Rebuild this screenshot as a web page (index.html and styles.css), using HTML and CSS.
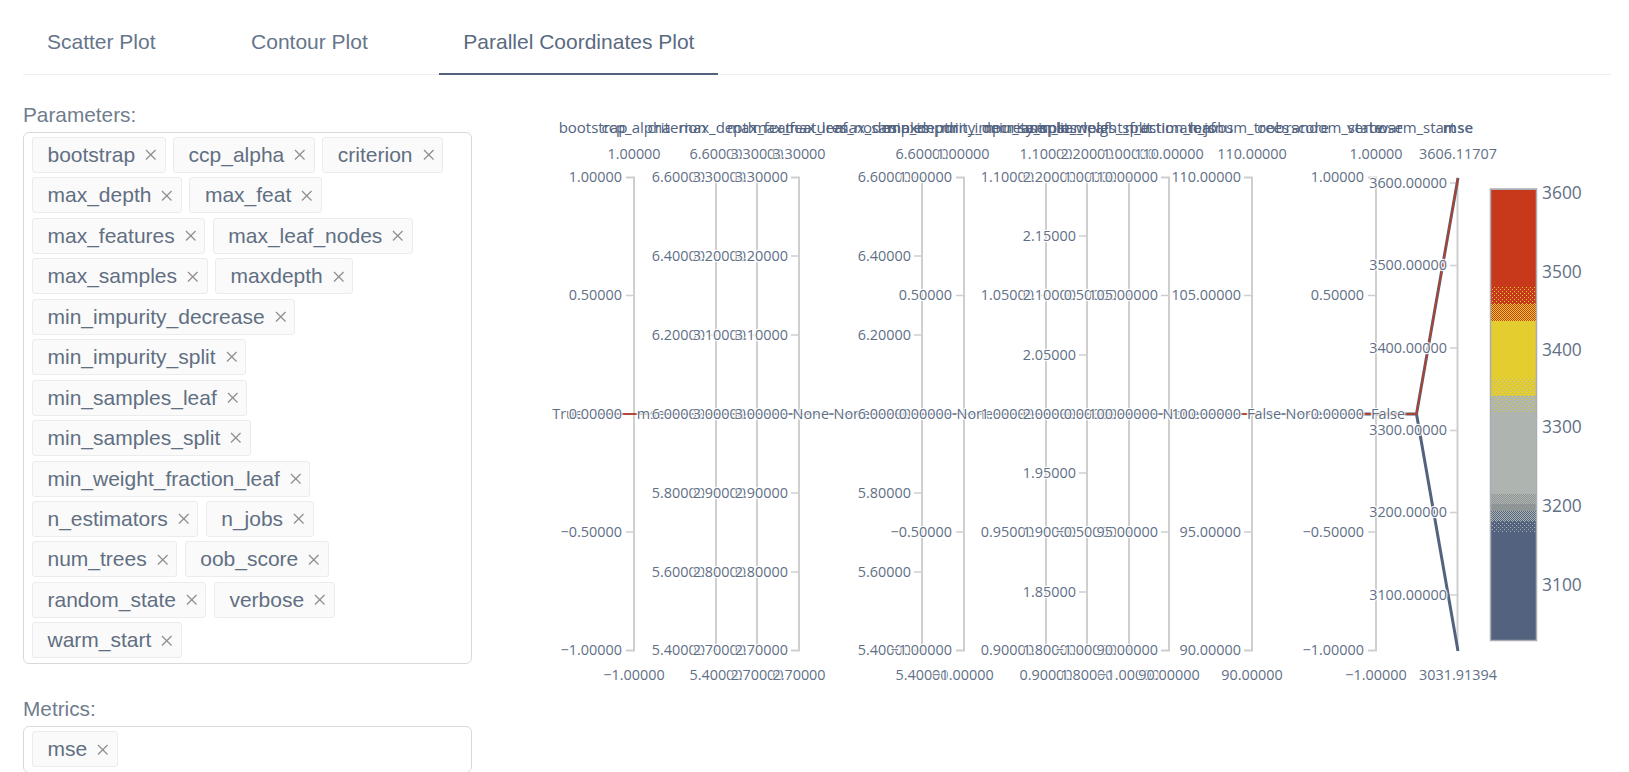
FILE: index.html
```html
<!DOCTYPE html>
<html lang="en">
<head>
<meta charset="utf-8">
<title>Parallel Coordinates Plot</title>
<link rel="stylesheet" href="styles.css">
</head>
<body>
<svg class="sprite" aria-hidden="true"><symbol id="close" viewBox="0 0 12 12"><path d="M1 1 11 11M11 1 1 11"/></symbol></svg>
<nav class="tabs">
  <div class="tab">Scatter Plot</div>
  <div class="tab">Contour Plot</div>
  <div class="tab active">Parallel Coordinates Plot</div>
</nav>
<main class="main">
  <section class="controls">
    <div class="field-label">Parameters:</div>
    <div class="select">
      <span class="tag">bootstrap<svg class="x"><use href="#close"/></svg></span>
      <span class="tag">ccp_alpha<svg class="x"><use href="#close"/></svg></span>
      <span class="tag">criterion<svg class="x"><use href="#close"/></svg></span>
      <span class="tag">max_depth<svg class="x"><use href="#close"/></svg></span>
      <span class="tag">max_feat<svg class="x"><use href="#close"/></svg></span>
      <span class="tag">max_features<svg class="x"><use href="#close"/></svg></span>
      <span class="tag">max_leaf_nodes<svg class="x"><use href="#close"/></svg></span>
      <span class="tag">max_samples<svg class="x"><use href="#close"/></svg></span>
      <span class="tag">maxdepth<svg class="x"><use href="#close"/></svg></span>
      <span class="tag">min_impurity_decrease<svg class="x"><use href="#close"/></svg></span>
      <span class="tag">min_impurity_split<svg class="x"><use href="#close"/></svg></span>
      <span class="tag">min_samples_leaf<svg class="x"><use href="#close"/></svg></span>
      <span class="tag">min_samples_split<svg class="x"><use href="#close"/></svg></span>
      <span class="tag">min_weight_fraction_leaf<svg class="x"><use href="#close"/></svg></span>
      <span class="tag">n_estimators<svg class="x"><use href="#close"/></svg></span>
      <span class="tag">n_jobs<svg class="x"><use href="#close"/></svg></span>
      <span class="tag">num_trees<svg class="x"><use href="#close"/></svg></span>
      <span class="tag">oob_score<svg class="x"><use href="#close"/></svg></span>
      <span class="tag">random_state<svg class="x"><use href="#close"/></svg></span>
      <span class="tag">verbose<svg class="x"><use href="#close"/></svg></span>
      <span class="tag">warm_start<svg class="x"><use href="#close"/></svg></span>
    </div>
    <div class="field-label metrics">Metrics:</div>
    <div class="select">
      <span class="tag">mse<svg class="x"><use href="#close"/></svg></span>
    </div>
  </section>
  <svg class="chart" viewBox="472 74 1157 698" width="1157" height="698" role="img" aria-label="Parallel coordinates plot">
    <defs>
      <pattern id="pSparse" width="4" height="4" patternUnits="userSpaceOnUse"><rect width="1" height="1" fill="#fff"/><rect x="2" y="2" width="1" height="1" fill="#fff"/></pattern>
      <pattern id="pChecker" width="2" height="2" patternUnits="userSpaceOnUse"><rect width="1" height="1" fill="#fff"/><rect x="1" y="1" width="1" height="1" fill="#fff"/></pattern>
      <mask id="mSparse" maskUnits="userSpaceOnUse" x="1490" y="188" width="47" height="452"><rect x="1490" y="188" width="47" height="452" fill="url(#pSparse)"/></mask>
      <mask id="mChecker" maskUnits="userSpaceOnUse" x="1490" y="188" width="47" height="452"><rect x="1490" y="188" width="47" height="452" fill="url(#pChecker)"/></mask>
    </defs>

    <g class="axes">
      <path d="M626 176.5h8V649.5h-8"/><path d="M708 176.5h8V649.5h-8"/><path d="M749 176.5h8V649.5h-8"/><path d="M791 176.5h8V649.5h-8"/>
      <path d="M914 176.5h8V649.5h-8"/><path d="M956 176.5h8V649.5h-8"/><path d="M1038 176.5h8V649.5h-8"/><path d="M1079 176.5h8V649.5h-8"/>
      <path d="M1121 176.5h8V649.5h-8"/><path d="M1161 176.5h8V649.5h-8"/><path d="M1244 176.5h8V649.5h-8"/><path d="M1368 176.5h8V649.5h-8"/>
      <path d="M1457.5 176.5V649.5"/>
    </g>
    <g class="minor">
      <path d="M626 294.5h8M626 413h8M626 531h8"/>
      <path d="M708 255h8M708 334h8M708 413h8M708 492h8M708 571h8"/>
      <path d="M749 255h8M749 334h8M749 413h8M749 492h8M749 571h8"/>
      <path d="M791 255h8M791 334h8M791 413h8M791 492h8M791 571h8"/>
      <path d="M914 255h8M914 334h8M914 413h8M914 492h8M914 571h8"/>
      <path d="M956 294.5h8M956 413h8M956 531h8"/>
      <path d="M1038 294.5h8M1038 413h8M1038 531h8"/>
      <path d="M1079 235h8M1079 294.5h8M1079 354h8M1079 413h8M1079 472h8M1079 531h8M1079 591h8"/>
      <path d="M1121 294.5h8M1121 413h8M1121 531h8"/>
      <path d="M1161 294.5h8M1161 413h8M1161 531h8"/>
      <path d="M1244 294.5h8M1244 413h8M1244 531h8"/>
      <path d="M1368 294.5h8M1368 413h8M1368 531h8"/>
      <path d="M1450 182h7M1450 264.5h7M1450 347h7M1450 429.5h7M1450 511.5h7M1450 594h7"/>
    </g>

    <path class="data-mid" d="M595 413H1416.5"/>
    <path class="data-blue" d="M1360 413H1416.5L1458 177M1416.5 413 1458 650"/>
    <path class="data-red" d="M622 413H640M1240 413H1256M1360 413H1416.5L1458 177"/>

    <g class="labels">
      <text x="583" y="413">True</text>
      <text x="622" y="176">1.00000</text><text x="622" y="294.5">0.50000</text><text x="622" y="413">0.00000</text><text x="622" y="531">−0.50000</text><text x="622" y="649">−1.00000</text>
      <text x="665" y="413">mse</text>
      <text x="705" y="176">6.60000</text><text x="705" y="255">6.40000</text><text x="705" y="334">6.20000</text><text x="705" y="413">6.00000</text><text x="705" y="492">5.80000</text><text x="705" y="571">5.60000</text><text x="705" y="649">5.40000</text>
      <text x="746" y="176">3.30000</text><text x="746" y="255">3.20000</text><text x="746" y="334">3.10000</text><text x="746" y="413">3.00000</text><text x="746" y="492">2.90000</text><text x="746" y="571">2.80000</text><text x="746" y="649">2.70000</text>
      <text x="788" y="176">3.30000</text><text x="788" y="255">3.20000</text><text x="788" y="334">3.10000</text><text x="788" y="413">3.00000</text><text x="788" y="492">2.90000</text><text x="788" y="571">2.80000</text><text x="788" y="649">2.70000</text>
      <text x="829" y="413">None</text>
      <text x="870" y="413">None</text>
      <text x="911" y="176">6.60000</text><text x="911" y="255">6.40000</text><text x="911" y="334">6.20000</text><text x="911" y="413">6.00000</text><text x="911" y="492">5.80000</text><text x="911" y="571">5.60000</text><text x="911" y="649">5.40000</text>
      <text x="952" y="176">1.00000</text><text x="952" y="294.5">0.50000</text><text x="952" y="413">0.00000</text><text x="952" y="531">−0.50000</text><text x="952" y="649">−1.00000</text>
      <text x="993" y="413">None</text>
      <text x="1034" y="176">1.10000</text><text x="1034" y="294.5">1.05000</text><text x="1034" y="413">1.00000</text><text x="1034" y="531">0.95000</text><text x="1034" y="649">0.90000</text>
      <text x="1076" y="176">2.20000</text><text x="1076" y="235">2.15000</text><text x="1076" y="294.5">2.10000</text><text x="1076" y="354">2.05000</text><text x="1076" y="413">2.00000</text><text x="1076" y="472">1.95000</text><text x="1076" y="531">1.90000</text><text x="1076" y="591">1.85000</text><text x="1076" y="649">1.80000</text>
      <text x="1117" y="176">1.00000</text><text x="1117" y="294.5">0.50000</text><text x="1117" y="413">0.00000</text><text x="1117" y="531">−0.50000</text><text x="1117" y="649">−1.00000</text>
      <text x="1158" y="176">110.00000</text><text x="1158" y="294.5">105.00000</text><text x="1158" y="413">100.00000</text><text x="1158" y="531">95.00000</text><text x="1158" y="649">90.00000</text>
      <text x="1199" y="413">None</text>
      <text x="1241" y="176">110.00000</text><text x="1241" y="294.5">105.00000</text><text x="1241" y="413">100.00000</text><text x="1241" y="531">95.00000</text><text x="1241" y="649">90.00000</text>
      <text x="1281" y="413">False</text>
      <text x="1322" y="413">None</text>
      <text x="1364" y="176">1.00000</text><text x="1364" y="294.5">0.50000</text><text x="1364" y="413">0.00000</text><text x="1364" y="531">−0.50000</text><text x="1364" y="649">−1.00000</text>
      <text x="1405" y="413">False</text>
      <text x="1447" y="182">3600.00000</text><text x="1447" y="264.5">3500.00000</text><text x="1447" y="347">3400.00000</text><text x="1447" y="429.5">3300.00000</text><text x="1447" y="511.5">3200.00000</text><text x="1447" y="594">3100.00000</text>
    </g>

    <g class="range">
      <text x="634" y="154">1.00000</text><text x="716" y="154">6.60000</text><text x="757" y="154">3.30000</text><text x="799" y="154">3.30000</text><text x="922" y="154">6.60000</text><text x="963" y="154">1.00000</text><text x="1046" y="154">1.10000</text><text x="1087" y="154">2.20000</text><text x="1129" y="154">1.00000</text><text x="1169" y="154">110.00000</text><text x="1252" y="154">110.00000</text><text x="1376" y="154">1.00000</text><text x="1458" y="154">3606.11707</text>
      <text x="634" y="675">−1.00000</text><text x="716" y="675">5.40000</text><text x="757" y="675">2.70000</text><text x="799" y="675">2.70000</text><text x="922" y="675">5.40000</text><text x="963" y="675">−1.00000</text><text x="1046" y="675">0.90000</text><text x="1087" y="675">1.80000</text><text x="1129" y="675">−1.00000</text><text x="1169" y="675">90.00000</text><text x="1252" y="675">90.00000</text><text x="1376" y="675">−1.00000</text><text x="1458" y="675">3031.91394</text>
    </g>

    <g class="titles">
      <text x="593" y="127">bootstrap</text><text x="636" y="127">ccp_alpha</text><text x="677" y="127">criterion</text><text x="718" y="127">max_depth</text><text x="759" y="127">max_feat</text><text x="800" y="127">max_features</text><text x="841" y="127">max_leaf_nodes</text><text x="882" y="127">max_samples</text><text x="923" y="127">maxdepth</text><text x="964" y="127">min_impurity_decrease</text><text x="1005" y="127">min_impurity_split</text><text x="1047" y="127">min_samples_leaf</text><text x="1088" y="127">min_samples_split</text><text x="1129" y="127">min_weight_fraction_leaf</text><text x="1170" y="127">n_estimators</text><text x="1211" y="127">n_jobs</text><text x="1252" y="127">num_trees</text><text x="1293" y="127">oob_score</text><text x="1334" y="127">random_state</text><text x="1375" y="127">verbose</text><text x="1416" y="127">warm_start</text><text class="last" x="1458" y="127">mse</text>
    </g>

    <g class="colorbar">
      <rect x="1491" y="188.5" width="45" height="451" fill="#53627e"/>
      <rect x="1491" y="189" width="45" height="131" fill="#c8391b"/>
      <rect x="1491" y="286" width="45" height="17" fill="#e3cd2f" mask="url(#mSparse)"/>
      <rect x="1491" y="303" width="45" height="17" fill="#e3cd2f" mask="url(#mChecker)"/>
      <rect x="1491" y="320" width="45" height="75" fill="#e3cd2f"/>
      <rect x="1491" y="377" width="45" height="18" fill="#aeb5b0" mask="url(#mSparse)"/>
      <rect x="1491" y="395" width="45" height="115" fill="#aeb5b0"/>
      <rect x="1491" y="395" width="45" height="16" fill="#e3cd2f" mask="url(#mSparse)"/>
      <rect x="1491" y="493" width="45" height="10" fill="#8f9596" mask="url(#mChecker)"/>
      <rect x="1491" y="503" width="45" height="7" fill="#8f9596"/>
      <rect x="1491" y="510" width="45" height="10" fill="#aeb5b0" mask="url(#mChecker)"/>
      <rect x="1491" y="520" width="45" height="12" fill="#aeb5b0" mask="url(#mSparse)"/>
      <rect class="frame" x="1490.5" y="188" width="46" height="451.5"/>
      <text x="1542" y="193">3600</text><text x="1542" y="272">3500</text><text x="1542" y="350">3400</text><text x="1542" y="427">3300</text><text x="1542" y="506">3200</text><text x="1542" y="585">3100</text>
    </g>
  </svg>
</main>
</body>
</html>
```
FILE: styles.css
```css
* { box-sizing: border-box; }
html, body { margin: 0; height: 772px; overflow: hidden; background: #fff; }
body { font-family: "Liberation Sans", Arial, sans-serif; font-size: 21px; color: #5d6d81; }

.sprite { display: none; }

.tabs {
  display: flex;
  gap: 47.5px;
  height: 74.5px;
  margin: 0 18px 0 23px;
  border-bottom: 1.5px solid #eeeeee;
}
.tab {
  height: 74.5px;
  padding: 30px 24px 0;
  line-height: 24px;
  color: #66758a;
}
.tab.active {
  color: #5a6a80;
  border-bottom: 2.5px solid #53627e;
}

.main { display: flex; align-items: flex-start; height: 698px; overflow: hidden; padding-left: 23px; }

.controls { flex: 0 0 449px; padding-top: 28.5px; }
.field-label { line-height: 24px; margin-bottom: 4.5px; color: #707d8e; font-size: 20.8px; }
.field-label.metrics { margin-top: 33.5px; }

.select {
  display: flex;
  flex-wrap: wrap;
  gap: 4.45px 7.5px;
  padding: 4.5px 8px 4.5px 8px;
  border: 1.5px solid #d9d9d9;
  border-radius: 6px;
  background: #fff;
}
.tag {
  display: flex;
  align-items: center;
  height: 36px;
  padding: 0 8px 0 14.5px;
  background: #fafafa;
  border: 1.5px solid #ececec;
  border-radius: 3px;
  color: #616f82;
}
.x {
  width: 11.5px;
  height: 11.5px;
  margin-left: 10px;
  fill: none;
  stroke: #8f8f8f;
  stroke-width: 1.3;
}

.chart { flex: 0 0 auto; display: block; margin: 0; }

.axes path { fill: none; stroke: #cfcfcf; stroke-width: 2; }
.minor path { fill: none; stroke: #cfcfcf; stroke-width: 1.5; }
.data-mid { fill: none; stroke: #53627e; stroke-width: 1.6; }
.data-blue { fill: none; stroke: #53627e; stroke-width: 3; }
.data-red { fill: none; stroke: #c8391b; stroke-width: 1.4; }

.labels text, .range text, .titles text {
  font-family: "Open Sans", sans-serif;
  font-size: 14.4px;
  dominant-baseline: central;
}
.labels text, .range text {
  text-shadow: 1px 1px 1px #fff, -1px -1px 1px #fff, 1px -1px 1px #fff, -1px 1px 1px #fff;
}
.labels { transform: translateY(-1px); }
.range { transform: translateY(-2px); }
.titles { transform: translateY(-1px); }
.labels text { text-anchor: end; fill: #5f6f86; }
.range text { text-anchor: middle; fill: #5f6f86; }
.titles text { text-anchor: middle; fill: #50627f; font-size: 15px; }
.titles .last { font-weight: 600; }

.colorbar text { font-family: "Open Sans", sans-serif; font-size: 17.4px; dominant-baseline: central; fill: #5f6f86; transform: translateY(-2px); }
.frame { fill: none; stroke: #a9adb3; stroke-width: 1.5; }
```
